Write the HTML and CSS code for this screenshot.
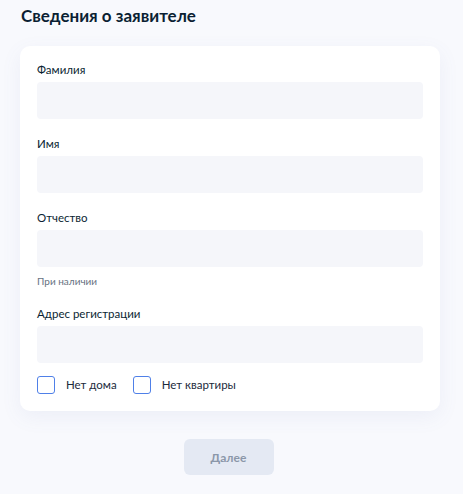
FILE: index.html
```html
<!DOCTYPE html>
<html lang="ru">
<head>
    <meta charset="UTF-8">
    <meta name="viewport" content="width=device-width, initial-scale=1.0">
    <title>Сведения о заявителе</title>
    <link rel="stylesheet" href="styles.css">
</head>
<body>
    <div class="page">
        <h1>Сведения о заявителе</h1>
        <form class="card">
            <div class="field">
                <label for="lastname">Фамилия</label>
                <input type="text" id="lastname" name="lastname">
            </div>
            <div class="field">
                <label for="firstname">Имя</label>
                <input type="text" id="firstname" name="firstname">
            </div>
            <div class="field">
                <label for="middlename">Отчество</label>
                <input type="text" id="middlename" name="middlename">
                <div class="hint">При наличии</div>
            </div>
            <div class="field">
                <label for="address">Адрес регистрации</label>
                <input type="text" id="address" name="address">
            </div>
            <div class="checks">
                <label class="check">
                    <span class="box"></span>
                    Нет дома
                </label>
                <label class="check">
                    <span class="box"></span>
                    Нет квартиры
                </label>
            </div>
        </form>
        <div class="actions">
            <button type="button" class="next-btn" disabled>Далее</button>
        </div>
    </div>
</body>
</html>
```

FILE: styles.css
```css
* {
    margin: 0;
    padding: 0;
    box-sizing: border-box;
    font-family: 'Lato', 'Open Sans', sans-serif;
}

body {
    background-color: #f8f9fd;
    color: #0b1f33;
}

.page {
    padding: 5px 23px 0 20px;
}

h1 {
    font-size: 17px;
    line-height: 22px;
    font-weight: 700;
    padding-left: 1px;
    margin-bottom: 19px;
}

.card {
    background-color: #fff;
    border-radius: 10px;
    box-shadow: 0 6px 20px rgba(100, 120, 180, 0.08);
    padding: 16px 17px 17px 17px;
}

.field {
    margin-bottom: 17px;
}

.field label {
    display: block;
    font-size: 11.5px;
    line-height: 16px;
    margin-bottom: 4px;
}

.field input {
    display: block;
    width: 100%;
    height: 37px;
    border: none;
    border-radius: 4px;
    background-color: #f5f6fa;
    outline: none;
}

.hint {
    font-size: 10px;
    line-height: 16px;
    color: #66727f;
    margin-top: 6px;
}

.checks {
    display: flex;
    gap: 16px;
    margin-top: -4px;
}

.check {
    display: flex;
    align-items: center;
    gap: 11px;
    font-size: 11.5px;
    line-height: 18px;
    color: #1b2a3c;
}

.box {
    width: 18px;
    height: 18px;
    border: 1.5px solid #4f80e8;
    border-radius: 3px;
}

.actions {
    display: flex;
    justify-content: center;
    padding-right: 3px;
    margin-top: 28px;
}

.next-btn {
    width: 90px;
    height: 36px;
    border: none;
    border-radius: 6px;
    background-color: #e4e9f3;
    color: #8b97a9;
    font-size: 12px;
    font-weight: 700;
}
```
